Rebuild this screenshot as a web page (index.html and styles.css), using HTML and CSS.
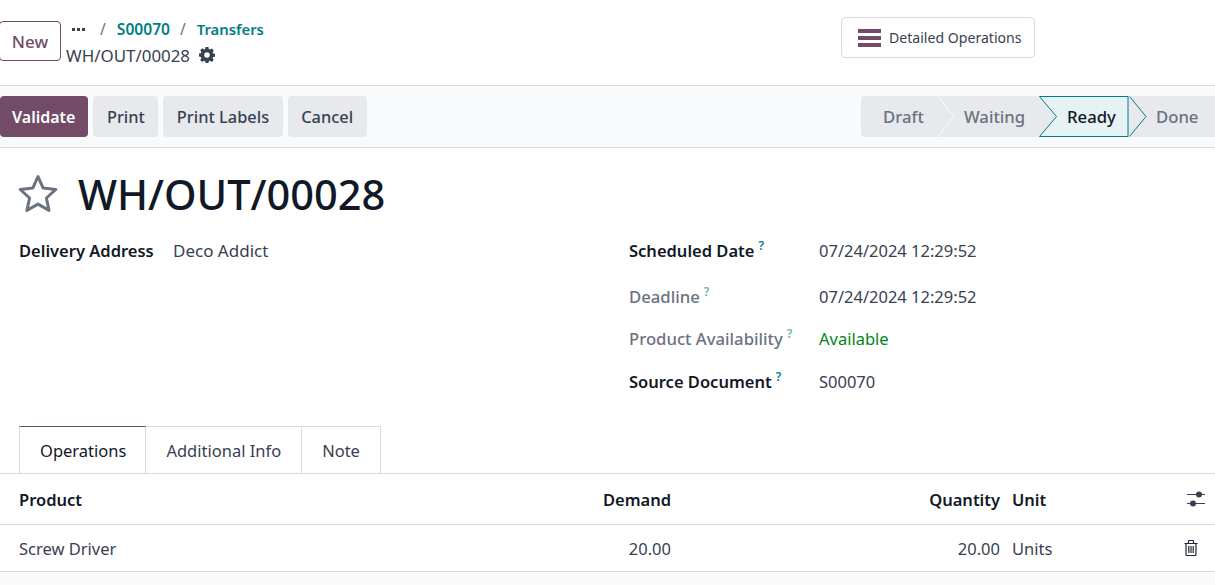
FILE: index.html
```html
<!DOCTYPE html>
<html lang="en">
<head>
<meta charset="utf-8">
<title>WH/OUT/00028</title>
<link rel="stylesheet" href="styles.css">
</head>
<body>
<header class="control">
  <button class="btn-new">New</button>
  <div class="crumbs">
    <div class="crumb-path">
      <span class="dots"><i></i><i></i><i></i></span>
      <span class="sep sep-first">/</span><a class="crumb-link">S00070</a>
      <span class="sep">/</span><a class="crumb-link crumb-transfers">Transfers</a>
    </div>
    <div class="crumb-current">
      <span>WH/OUT/00028</span>
      <svg class="gear" viewBox="0 0 16 16" width="16" height="16"><path fill="#374151" fill-rule="evenodd" d="M6.6 0h2.8l.4 2.1 1.2.5 1.8-1.2 2 2-1.2 1.8.5 1.2 2.1.4v2.8l-2.1.4-.5 1.2 1.2 1.8-2 2-1.8-1.2-1.2.5-.4 2.1H6.6l-.4-2.1-1.2-.5-1.8 1.2-2-2 1.2-1.8-.5-1.2L-.2 9.4V6.6l2.1-.4.5-1.2-1.2-1.8 2-2 1.8 1.2 1.2-.5zM8 5.2a2.8 2.8 0 1 0 0 5.6 2.8 2.8 0 0 0 0-5.6z"/></svg>
    </div>
  </div>
  <button class="btn-stat">
    <svg class="bars" viewBox="0 0 23 18" width="23" height="18"><path fill="#714b67" d="M0 0h23v4H0zM0 7h23v4H0zM0 14h23v4H0z"/></svg>
    <span class="stat-text">Detailed Operations</span>
  </button>
</header>

<div class="toolbar">
  <div class="actions">
    <button class="btn btn-primary">Validate</button>
    <button class="btn">Print</button>
    <button class="btn">Print Labels</button>
    <button class="btn">Cancel</button>
  </div>
  <div class="statusbar">
    <span class="stage stage-draft">Draft</span>
    <span class="stage stage-waiting">Waiting</span>
    <span class="stage stage-ready">Ready</span>
    <span class="stage stage-done">Done</span>
    <svg class="chevrons" viewBox="0 0 354 41" width="354" height="41">
      <path d="M76.5 0 93 20.5 76.5 41" fill="none" stroke="#f9fafb" stroke-width="1"/>
      <path d="M178.5 .5H267V40.5H178.5L195.5 20.5z" fill="#e6f2f3" stroke="#017e84" stroke-width="1"/>
      <path d="M268.5 .5 285 20.5 268.5 40.5" fill="none" stroke="#017e84" stroke-width="1"/>
    </svg>
  </div>
</div>

<main class="sheet">
  <div class="title-row">
    <svg class="star" viewBox="0 0 40 38" width="40" height="38"><path fill="none" stroke="#6b7280" stroke-width="3" stroke-linejoin="round" d="M20 2.5l5.2 11.6 12.6 1.4-9.4 8.5 2.6 12.4L20 30.1 8.9 36.4l2.7-12.4-9.4-8.5 12.6-1.4z"/></svg>
    <h1>WH/OUT/00028</h1>
  </div>

  <div class="groups">
    <div class="group-left">
      <span class="label strong">Delivery Address</span>
      <span class="value value-partner">Deco Addict</span>
    </div>
    <div class="group-right">
      <div class="field field-date">
        <span class="label strong">Scheduled Date<sup>?</sup></span>
        <span class="value">07/24/2024 12:29:52</span>
      </div>
      <div class="field field-deadline">
        <span class="label muted">Deadline<sup>?</sup></span>
        <span class="value">07/24/2024 12:29:52</span>
      </div>
      <div class="field field-avail">
        <span class="label muted">Product Availability<sup>?</sup></span>
        <span class="value ok">Available</span>
      </div>
      <div class="field field-source">
        <span class="label strong">Source Document<sup>?</sup></span>
        <span class="value">S00070</span>
      </div>
    </div>
  </div>

  <nav class="tabs">
    <span class="tab tab-active">Operations</span>
    <span class="tab">Additional Info</span>
    <span class="tab">Note</span>
  </nav>

  <div class="row row-head">
    <span class="col-product">Product</span>
    <span class="col-demand">Demand</span>
    <span class="col-qty">Quantity</span>
    <span class="col-unit">Unit</span>
    <span class="col-icon col-icon-head">
      <svg viewBox="0 0 18 16" width="18" height="16"><path stroke="#374151" stroke-width="1" d="M0 3.5h18M0 12.5h18"/><circle cx="12" cy="3.5" r="3" fill="#374151"/><circle cx="6" cy="12.5" r="3" fill="#374151"/></svg>
    </span>
  </div>
  <div class="row row-body">
    <span class="col-product">Screw Driver</span>
    <span class="col-demand">20.00</span>
    <span class="col-qty">20.00</span>
    <span class="col-unit">Units</span>
    <span class="col-icon col-icon-body">
      <svg viewBox="0 0 14 16" width="14" height="16"><path fill="none" stroke="#1f2937" stroke-width="1.2" d="M.5 3.5h13M2 3.5v11a1 1 0 0 0 1 1h8a1 1 0 0 0 1-1v-11M4.5 3.5V1.5a1 1 0 0 1 1-1h3a1 1 0 0 1 1 1v2M4.8 6v7M7 6v7M9.2 6v7"/></svg>
    </span>
  </div>
</main>
<div class="foot"></div>
</body>
</html>
```

FILE: styles.css
```css
* { box-sizing: border-box; }
html, body { margin: 0; padding: 0; height: 100%; }
body {
  width: 1215px;
  height: 585px;
  overflow: hidden;
  font-family: "Noto Sans", "Open Sans", sans-serif;
  font-size: 16.5px;
  color: #374151;
  background: #fff;
  display: flex;
  flex-direction: column;
}
button { font: inherit; cursor: pointer; }

.control {
  height: 86px;
  flex: none;
  border-bottom: 1px solid #d8dadd;
  display: flex;
  align-items: flex-start;
  padding-top: 17px;
}
.btn-new {
  margin: 4px 0 0 -1px;
  width: 62px;
  height: 40px;
  border: 1px solid #714b67;
  border-radius: 4px;
  background: #fff;
  color: #714b67;
  font-weight: 500;
  font-size: 17px;
  padding: 0;
}
.crumbs { margin-left: 5px; width: 775px; }
.crumb-path {
  display: flex;
  align-items: center;
  height: 23px;
  font-size: 15.6px;
  font-weight: 600;
}
.dots { display: inline-flex; gap: 2px; margin: 2px 0 0 6px; }
.dots i { width: 3px; height: 3px; background: #374151; display: block; }
.sep { color: #6b7280; font-weight: 400; margin: 0 11px 0 10px; }
.sep-first { margin-left: 15px; }
.crumb-link { color: #017e84; }
.crumb-transfers { font-size: 14.8px; }
.crumb-current {
  display: flex;
  align-items: center;
  height: 28px;
  margin-top: 1px;
  font-size: 16.9px;
  gap: 9px;
}
.btn-stat {
  display: flex;
  align-items: center;
  gap: 8px;
  width: 194px;
  height: 41px;
  padding: 0 0 0 16px;
  background: #fff;
  border: 1px solid #d8dadd;
  border-radius: 4px;
  color: #374151;
  font-size: 14.1px;
}
.stat-text { margin-top: -1px; }

.toolbar {
  height: 62px;
  flex: none;
  background: #f9fafb;
  border-bottom: 1px solid #d8dadd;
  display: flex;
  justify-content: space-between;
  align-items: flex-start;
  padding-top: 10px;
}
.actions { display: flex; gap: 5px; }
.btn {
  height: 41px;
  padding: 0 13.5px;
  border: 0;
  border-radius: 4px;
  background: #e7e9ed;
  color: #374151;
  font-weight: 500;
  font-size: 16.4px;
}
.btn-primary {
  background: #714b67;
  color: #fff;
  font-weight: 600;
  font-size: 16px;
  padding: 0 13px 0 12px;
}
.statusbar {
  position: relative;
  width: 354px;
  height: 41px;
  background: #e7e9ed;
  border-radius: 4px 0 0 4px;
  display: flex;
  font-size: 16.7px;
  font-weight: 500;
  color: #6b7280;
  line-height: 41px;
}
.stage { position: relative; z-index: 1; display: block; }
.stage-draft { margin-left: 22px; width: 81px; }
.stage-waiting { width: 103px; }
.stage-ready { width: 89px; color: #111827; }
.chevrons { position: absolute; left: 0; top: 0; z-index: 0; }

.sheet { flex: 1; padding: 0; }
.title-row {
  display: flex;
  align-items: center;
  height: 90px;
  padding: 0 0 0 18px;
}
.star { flex: none; }
h1 {
  margin: 2px 0 0 20px;
  font-size: 41.5px;
  font-weight: 500;
  color: #111827;
}
.groups { display: flex; height: 188px; padding: 1px 0 0 19px; }
.group-left { width: 610px; display: flex; align-items: baseline; height: 23px; }
.group-left .label { width: 154px; flex: none; }
.value-partner { font-size: 17px; }
.group-right { flex: 1; }
.field { display: flex; align-items: baseline; }
.field .label { width: 190px; flex: none; }
.field-deadline { margin-top: 23px; }
.field-avail { margin-top: 19px; }
.field-source { margin-top: 20px; }
.field, .group-left { line-height: 23px; }
.strong { font-weight: 600; color: #111827; }
.muted { font-weight: 500; color: #6b7280; font-size: 16.7px; }
.ok { color: #008818; }
sup { color: #017e84; font-size: 12px; font-weight: 600; line-height: 0; margin-left: 4px; vertical-align: 7px; }
.muted sup { opacity: .6; }

.tabs { display: flex; padding-left: 19px; height: 48px; border-bottom: 1px solid #d8dadd; }
.tab {
  height: 47px;
  padding: 0 20px;
  line-height: 47px;
  border: 1px solid #d8dadd;
  border-bottom: 0;
  border-left: 0;
}
.tab-active { padding-right: 19px; border-left: 1px solid #d8dadd; border-top: 1px solid #714b67; color: #111827; }

.row { display: flex; padding-left: 19px; align-items: center; border-bottom: 1px solid #d8dadd; }
.row-head { height: 51px; font-weight: 600; color: #111827; }
.row-body { height: 47px; }
.col-product { width: 510px; }
.col-demand { width: 142px; text-align: right; }
.col-qty { width: 329px; text-align: right; }
.col-unit { width: 165px; padding-left: 12px; }
.col-icon { width: 50px; display: flex; justify-content: flex-end; }
.col-icon-head { padding-right: 10px; }
.col-icon-body { padding-right: 17px; }
.foot { height: 13px; flex: none; background: #f9f9f9; }
```
